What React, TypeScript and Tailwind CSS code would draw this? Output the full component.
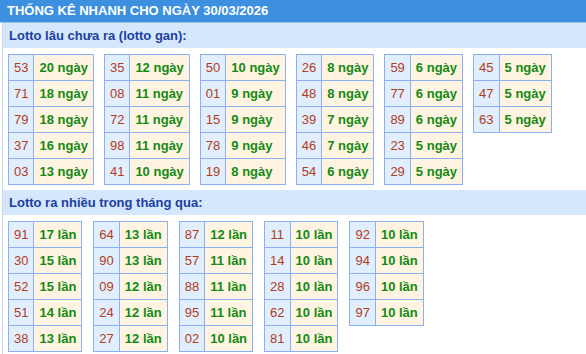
type Row = [string, string];

const ganTables: Row[][] = [
  [["53", "20"], ["71", "18"], ["79", "18"], ["37", "16"], ["03", "13"]],
  [["35", "12"], ["08", "11"], ["72", "11"], ["98", "11"], ["41", "10"]],
  [["50", "10"], ["01", "9"], ["15", "9"], ["78", "9"], ["19", "8"]],
  [["26", "8"], ["48", "8"], ["39", "7"], ["46", "7"], ["54", "6"]],
  [["59", "6"], ["77", "6"], ["89", "6"], ["23", "5"], ["29", "5"]],
  [["45", "5"], ["47", "5"], ["63", "5"]],
];

const nhieuTables: Row[][] = [
  [["91", "17"], ["30", "15"], ["52", "15"], ["51", "14"], ["38", "13"]],
  [["64", "13"], ["90", "13"], ["09", "12"], ["24", "12"], ["27", "12"]],
  [["87", "12"], ["57", "11"], ["88", "11"], ["95", "11"], ["02", "10"]],
  [["11", "10"], ["14", "10"], ["28", "10"], ["62", "10"], ["81", "10"]],
  [["92", "10"], ["94", "10"], ["96", "10"], ["97", "10"]],
];

const LottoTable = ({ rows, unit }: { rows: Row[]; unit: string }) => (
  <table className="border-collapse text-[13px] leading-[15px]">
    <tbody>
      {rows.map(([so, count]) => (
        <tr key={so}>
          <td className="border border-[#8cb0ef] bg-[#e1eefd] px-[5px] py-[5px] text-center text-[#b23c1c]">
            {so}
          </td>
          <td className="border border-[#8cb0ef] bg-[#fff4e2] px-[5px] py-[5px] font-bold whitespace-nowrap text-[#148a14]">
            {count} {unit}
          </td>
        </tr>
      ))}
    </tbody>
  </table>
);

const SubHeader = ({ title }: { title: string }) => (
  <div className="h-[25px] bg-[#d4e7fc] pl-[6px] flex items-center text-[13px] font-bold text-[#1c3f9e]">
    {title}
  </div>
);

export default function App() {
  return (
    <main className="w-[586px] h-[354px] overflow-hidden bg-white font-['Liberation_Sans',Arial,sans-serif]">
      <div className="h-[23px] bg-[#3d8fe0] border-b border-[#9cc4ee] pl-[7px] flex items-center text-[13px] font-bold text-white">
        THỐNG KÊ NHANH CHO NGÀY 30/03/2026
      </div>
      <div className="ml-[2px] border-l border-[#c6daf0]">
        <SubHeader title="Lotto lâu chưa ra (lotto gan):" />
        <div className="flex items-start gap-x-[10px] pl-[5px] pt-[6px] pb-[5px]">
          {ganTables.map((rows, i) => (
            <LottoTable key={i} rows={rows} unit="ngày" />
          ))}
        </div>
        <SubHeader title="Lotto ra nhiều trong tháng qua:" />
        <div className="flex items-start gap-x-[11px] pl-[5px] pt-[6px] pb-[5px]">
          {nhieuTables.map((rows, i) => (
            <LottoTable key={i} rows={rows} unit="lần" />
          ))}
        </div>
      </div>
    </main>
  );
}
